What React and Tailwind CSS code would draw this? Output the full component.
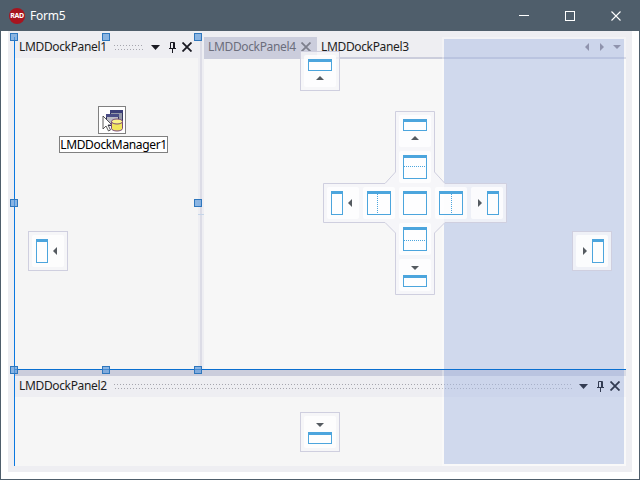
import React from "react";

const BLUE = "#4ca5dd";

function Win({ x = 4, y = 4, w = 24, h = 24, split }) {
  return (
    <g>
      <rect x={x + 0.5} y={y + 0.5} width={w - 1} height={h - 1} fill="#ffffff" fillOpacity="0.55" stroke={BLUE} />
      <rect x={x} y={y} width={w} height={3} fill={BLUE} />
      {split === "h-top" && <line x1={x + 1} x2={x + w - 1} y1={15.5} y2={15.5} stroke={BLUE} strokeDasharray="1 1" />}
      {split === "h-bottom" && <line x1={x + 1} x2={x + w - 1} y1={17.5} y2={17.5} stroke={BLUE} strokeDasharray="1 1" />}
      {split === "v-left" && <line x1={14.5} x2={14.5} y1={y + 3} y2={y + h - 1} stroke={BLUE} strokeDasharray="1 1" />}
      {split === "v-right" && <line x1={16.5} x2={16.5} y1={y + 3} y2={y + h - 1} stroke={BLUE} strokeDasharray="1 1" />}
    </g>
  );
}

function Glyph({ kind }) {
  return (
    <svg width="32" height="32" viewBox="0 0 32 32" className="block">
      {kind === "top" && (
        <>
          <Win h={12} />
          <path d="M16 21 L20 25 L12 25 Z" fill="#555a60" />
        </>
      )}
      {kind === "bottom" && (
        <>
          <Win y={16} h={12} />
          <path d="M12 7 L20 7 L16 11 Z" fill="#555a60" />
        </>
      )}
      {kind === "left" && (
        <>
          <Win w={12} />
          <path d="M25 12 L25 20 L21 16 Z" fill="#555a60" />
        </>
      )}
      {kind === "right" && (
        <>
          <Win x={16} w={12} />
          <path d="M7 12 L7 20 L11 16 Z" fill="#555a60" />
        </>
      )}
      {kind === "center" && <Win />}
      {kind === "split-top" && <Win split="h-top" />}
      {kind === "split-bottom" && <Win split="h-bottom" />}
      {kind === "split-left" && <Win split="v-left" />}
      {kind === "split-right" && <Win split="v-right" />}
    </svg>
  );
}

function Btn({ kind, className = "" }) {
  return (
    <div className={"w-8 h-8 rounded-[2px] bg-white/75 " + className}>
      <Glyph kind={kind} />
    </div>
  );
}

function Guide({ kind, className }) {
  return (
    <div className={"absolute w-10 h-10 p-[3px] border border-[#cfcfdf] bg-[#f6f6f9]/80 " + className}>
      <Btn kind={kind} />
    </div>
  );
}

function Dots({ className }) {
  return (
    <div
      className={
        "h-[5px] bg-[linear-gradient(90deg,#a6a6ae_1px,transparent_1px),linear-gradient(90deg,#a6a6ae_1px,transparent_1px)] bg-[length:3px_1px] bg-[position:0_0,1px_4px] bg-repeat-x " +
        className
      }
    />
  );
}

function Pin({ color = "#1a1a22" }) {
  return (
    <svg width="9" height="13" viewBox="0 0 9 13" className="block">
      <path d="M2.5 1.5 H6.5 V7.5 H2.5 Z M1 7.5 H8 M4.5 8 V12 M5.5 2 V7" fill="none" stroke={color} />
    </svg>
  );
}

function Cross({ size = 10, color = "#1a1a22", weight = 1.8 }) {
  return (
    <svg width={size} height={size} viewBox="0 0 10 10" className="block">
      <path d="M0.5 0.5 L9.5 9.5 M9.5 0.5 L0.5 9.5" stroke={color} strokeWidth={weight} />
    </svg>
  );
}

function Caret({ color = "#1a1a22" }) {
  return (
    <svg width="9" height="5" viewBox="0 0 9 5" className="block">
      <path d="M0 0 H9 L4.5 5 Z" fill={color} />
    </svg>
  );
}

function Caption({ title, dotsClass, trailing = "", iconColor = "#1a1a22" }) {
  return (
    <div className="h-5 flex items-center bg-[#eeeef2] pl-[4px] text-[12px] tracking-[-0.35px] text-[#1e1e1e] shrink-0">
      <span className="leading-none w-[87px] shrink-0">{title}</span>
      <Dots className={"ml-2 " + dotsClass} />
      <div className={"flex items-center ml-[7px] " + trailing}>
        <Caret color={iconColor} />
        <span className="ml-2">
          <Pin color={iconColor} />
        </span>
        <span className="ml-[5px]">
          <Cross color={iconColor} />
        </span>
      </div>
    </div>
  );
}

function Handle({ className }) {
  return <div className={"absolute w-2 h-2 border border-[#2f77bd] bg-[#5f9bdc]/70 " + className} />;
}

function ComponentIcon() {
  return (
    <svg width="26" height="26" viewBox="0 0 26 26" className="block">
      <rect x="10.5" y="2.5" width="12" height="11" fill="#9498a8" stroke="#33365f" />
      <rect x="10" y="2" width="13" height="3" fill="#3c3f78" />
      <rect x="6.5" y="6.5" width="12" height="11" fill="#bcbdc6" stroke="#33365f" />
      <rect x="6" y="6" width="13" height="3" fill="#4a4d86" />
      <path d="M3 8 L3 21 L6 18 L8.5 23 L10.5 22 L8 17 L12 17 Z" fill="#fff" stroke="#333" strokeWidth="0.8" />
      <path d="M11.5 13.5 V20.5 A5.5 2.5 0 0 0 22.5 20.5 V13.5" fill="#f2e65c" stroke="#7a4a7a" />
      <ellipse cx="17" cy="13.5" rx="5.5" ry="2.5" fill="#fbf38a" stroke="#7a4a7a" />
    </svg>
  );
}

export default function App() {
  return (
    <div
      className="relative w-[640px] h-[480px] overflow-hidden flex flex-col bg-white border border-t-0 border-[#4f5e6b] select-none"
      style={{ fontFamily: '"Noto Sans", "Open Sans", sans-serif' }}
    >
      {/* title bar */}
      <div className="h-[31px] -mx-px bg-[#4f5e6b] flex items-center shrink-0 text-white text-[12px]">
        <div className="ml-[9px] w-4 h-4 rounded-full bg-[#a8141f] flex items-center justify-center text-[7px] font-bold leading-none tracking-[-0.3px]">
          RAD
        </div>
        <span className="ml-[5px] tracking-[-0.2px]">Form5</span>
        <div className="ml-auto flex items-center mr-[19px] gap-[36px]">
          <div className="w-[10px] h-px bg-white" />
          <div className="w-[10px] h-[10px] border border-white" />
          <Cross size={10} color="#ffffff" weight={1.1} />
        </div>
      </div>

      {/* form */}
      <div className="flex-1 min-h-0 px-[7px] pb-[7px] flex flex-col">
        <div className="flex-1 min-h-0 bg-[#eeeef2] p-[6px] flex flex-col">
          <div className="flex-1 min-h-0 flex flex-col pl-px">
            {/* upper row */}
            <div className="flex-1 min-h-0 flex">
              {/* panel 1 */}
              <div className="w-[183px] flex flex-col shrink-0">
                <Caption title="LMDDockPanel1" dotsClass="w-[30px]" />
                <div className="flex-1 bg-[#f5f5f5] mt-px relative">
                  <div className="absolute left-[83px] top-[48px] w-7 h-7 border border-[#808080] bg-white p-px">
                    <ComponentIcon />
                  </div>
                  <div className="absolute left-[44px] top-[78px] h-[17px] w-[109px] border border-[#808080] bg-white text-[12px] tracking-[-0.35px] leading-[15px] text-black text-center">
                    LMDDockManager1
                  </div>
                </div>
              </div>
              {/* splitter */}
              <div className="w-[6px] shrink-0 flex">
                <div className="w-[2px] bg-[#eeeef2]" />
                <div className="w-[2px] bg-[#dcdce6]" />
                <div className="w-[2px] bg-[#eeeef2]" />
              </div>
              {/* tabbed panel */}
              <div className="flex-1 min-w-0 flex flex-col">
                <div className="h-[22px] flex border-b-2 border-[#cbcddc] shrink-0 text-[12px] tracking-[-0.35px]">
                  <div className="w-[113px] h-[22px] bg-[#cbcddc] text-[#6c6e7c] flex items-center pl-[4px] shrink-0">
                    <span className="leading-none w-[87px] shrink-0 mb-[2px]">LMDDockPanel4</span>
                    <span className="ml-[6px] mb-[2px]">
                      <Cross size={10} color="#7d7f8c" />
                    </span>
                  </div>
                  <div className="flex-1 flex items-center pl-[4px] text-[#1e1e1e]">
                    <span className="leading-none mb-[1px]">LMDDockPanel3</span>
                  </div>
                </div>
                <div className="flex-1 bg-[#f7f7f7]" />
              </div>
            </div>
            {/* horizontal splitter */}
            <div className="h-[7px] bg-[#cbcddc] shrink-0" />
            {/* panel 2 */}
            <div className="h-[90px] flex flex-col shrink-0">
              <Caption title="LMDDockPanel2" dotsClass="flex-1" trailing="mr-[6px] relative z-10" iconColor="#333c52" />
              <div className="flex-1 bg-[#f6f6f6] mt-px" />
            </div>
          </div>
        </div>
      </div>

      {/* docking preview overlay */}
      <div className="absolute left-[441px] top-[37px] w-[184px] h-[429px] border-2 border-white/30 bg-clip-padding bg-[#a9bbe3]/50">
        <div className="flex justify-end items-center pr-[3px] pt-[4px] h-[12px]">
          <svg width="4" height="8" viewBox="0 0 4 8" className="block"><path d="M4 0 V8 L0 4 Z" fill="#8f93ad" /></svg>
          <svg width="4" height="8" viewBox="0 0 4 8" className="block ml-[11px]"><path d="M0 0 V8 L4 4 Z" fill="#8f93ad" /></svg>
          <svg width="8" height="4" viewBox="0 0 8 4" className="block ml-[9px]"><path d="M0 0 H8 L4 4 Z" fill="#8f93ad" /></svg>
        </div>
      </div>

      {/* selection lines */}
      <div className="absolute left-[13px] top-[37px] w-px h-[429px] bg-[#0a78e0]" />
      <div className="absolute left-[13px] top-[369px] w-[612px] h-px bg-[#0a6fd0]" />
      <div className="absolute left-[197px] top-[214px] w-[6px] h-px bg-[#c5d5e8]" />

      {/* handles */}
      <Handle className="left-[9px] top-[33px]" />
      <Handle className="left-[101px] top-[33px]" />
      <Handle className="left-[193px] top-[33px]" />
      <Handle className="left-[9px] top-[199px]" />
      <Handle className="left-[193px] top-[199px]" />
      <Handle className="left-[9px] top-[366px]" />
      <Handle className="left-[101px] top-[366px]" />
      <Handle className="left-[193px] top-[366px]" />

      {/* outer guides */}
      <Guide kind="top" className="left-[299px] top-[51px]" />
      <Guide kind="left" className="left-[27px] top-[231px]" />
      <Guide kind="right" className="left-[571px] top-[231px]" />
      <Guide kind="bottom" className="left-[299px] top-[412px]" />

      {/* centre cross */}
      <div className="absolute left-[322px] top-[111px] w-[184px] h-[184px]">
        <svg width="184" height="184" viewBox="0 0 184 184" className="absolute inset-0">
          <path
            d="M72.5 .5 H111.5 V61 L122 72.5 H183.5 V111.5 H122 L111.5 122 V183.5 H72.5 V122 L62 111.5 H.5 V72.5 H62 L72.5 61 Z"
            fill="#f5f5f9"
            fillOpacity="0.8"
            stroke="#cfcfdf"
          />
        </svg>
        <div className="relative grid grid-cols-[repeat(5,32px)] grid-rows-[repeat(5,32px)] gap-1 p-1">
          <Btn kind="top" className="col-start-3 row-start-1" />
          <Btn kind="split-top" className="col-start-3 row-start-2" />
          <Btn kind="left" className="col-start-1 row-start-3" />
          <Btn kind="split-left" className="col-start-2 row-start-3" />
          <Btn kind="center" className="col-start-3 row-start-3" />
          <Btn kind="split-right" className="col-start-4 row-start-3" />
          <Btn kind="right" className="col-start-5 row-start-3" />
          <Btn kind="split-bottom" className="col-start-3 row-start-4" />
          <Btn kind="bottom" className="col-start-3 row-start-5" />
        </div>
      </div>
    </div>
  );
}
